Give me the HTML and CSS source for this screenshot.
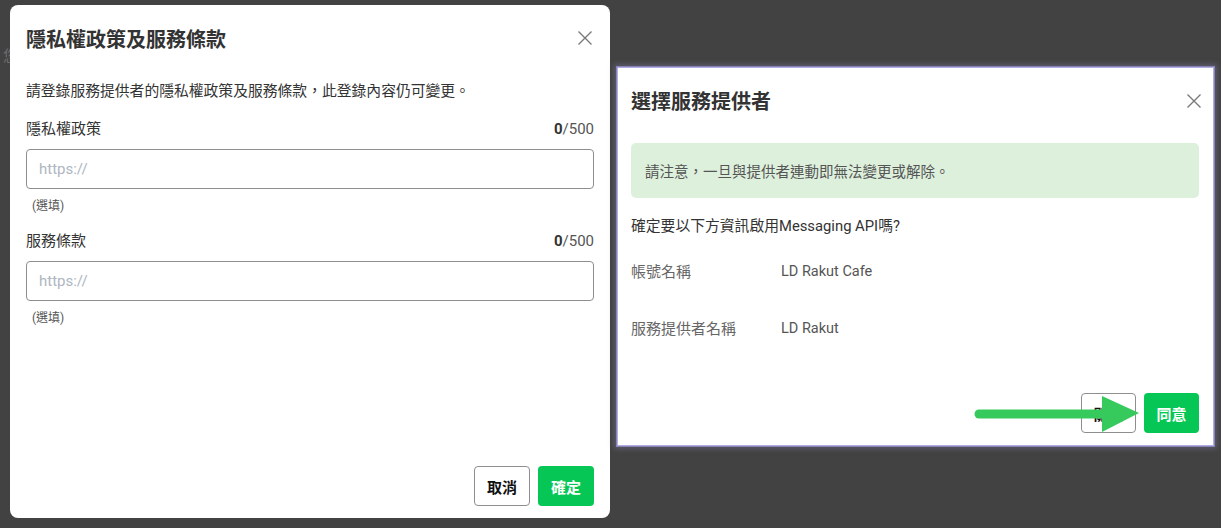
FILE: index.html
```html
<!DOCTYPE html>
<html lang="zh-Hant">
<head>
<meta charset="utf-8">
<title>Modals</title>
<link rel="stylesheet" href="styles.css">
</head>
<body>
<div class="backdrop-text">您</div>
<div class="stage">
  <section class="modal modal-left">
    <header class="m-head">
      <h2 class="m-title">隱私權政策及服務條款</h2>
      <button class="close" aria-label="close">
        <svg viewBox="0 0 16 16" width="16" height="16"><path d="M1.5 1.5 L14.5 14.5 M14.5 1.5 L1.5 14.5" stroke="#7a7a7a" stroke-width="1.4" fill="none"/></svg>
      </button>
    </header>
    <div class="m-body">
      <p class="desc">請登錄服務提供者的隱私權政策及服務條款，此登錄內容仍可變更。</p>
      <div class="field">
        <div class="field-top"><span class="label">隱私權政策</span><span class="count"><b>0</b>/500</span></div>
        <div class="input"><span class="ph">https://</span></div>
        <div class="hint">(選填)</div>
      </div>
      <div class="field field-2">
        <div class="field-top"><span class="label">服務條款</span><span class="count"><b>0</b>/500</span></div>
        <div class="input"><span class="ph">https://</span></div>
        <div class="hint">(選填)</div>
      </div>
    </div>
    <footer class="m-foot">
      <button class="btn btn-outline">取消</button>
      <button class="btn btn-green">確定</button>
    </footer>
  </section>

  <section class="modal modal-right">
    <header class="r-head">
      <h2 class="m-title">選擇服務提供者</h2>
      <button class="close" aria-label="close">
        <svg viewBox="0 0 16 16" width="16" height="16"><path d="M1.5 1.5 L14.5 14.5 M14.5 1.5 L1.5 14.5" stroke="#7a7a7a" stroke-width="1.4" fill="none"/></svg>
      </button>
    </header>
    <div class="r-body">
      <div class="alert">請注意，一旦與提供者連動即無法變更或解除。</div>
      <p class="confirm">確定要以下方資訊啟用Messaging API嗎?</p>
      <div class="row"><span class="k">帳號名稱</span><span class="v">LD Rakut Cafe</span></div>
      <div class="row row-2"><span class="k">服務提供者名稱</span><span class="v">LD Rakut</span></div>
    </div>
    <footer class="r-foot">
      <button class="btn btn-outline btn-sm">關閉</button>
      <button class="btn btn-green btn-sm">同意</button>
    </footer>
    <svg class="arrow" viewBox="0 0 180 45" width="180" height="45">
      <line x1="11" y1="21" x2="140" y2="21" stroke="#36c95c" stroke-width="9" stroke-linecap="round"/>
      <polygon points="134,3 171,20 134,39" fill="#36c95c"/>
    </svg>
  </section>
</div>
</body>
</html>
```

FILE: styles.css
```css
* { box-sizing: border-box; }
html, body { margin: 0; padding: 0; }
body {
  background: #424242;
  width: 1221px;
  height: 528px;
  overflow: hidden;
  font-family: Roboto, "Noto Sans CJK TC", sans-serif;
  color: #333;
  position: relative;
}
.backdrop-text {
  position: absolute;
  left: 3px;
  top: 44px;
  font-size: 15px;
  color: #6e6e6e;
}
.stage {
  display: flex;
  align-items: flex-start;
  gap: 8px;
  padding: 5px 0 0 10px;
  position: relative;
}
.modal {
  background: #fff;
  display: flex;
  flex-direction: column;
}
.modal-left {
  width: 600px;
  height: 513px;
  border-radius: 8px;
  padding: 0 16px 12px;
}
.m-head {
  display: flex;
  align-items: center;
  justify-content: space-between;
  padding-top: 21px;
}
.m-title {
  margin: 0;
  font-size: 20px;
  line-height: 28px;
  font-weight: 700;
  color: #333;
}
.close {
  border: 0;
  background: none;
  padding: 0;
  width: 16px;
  height: 16px;
  display: flex;
  margin-right: 1px;
  margin-top: -4px;
}
.m-body { flex: 1; }
.desc {
  margin: 27px 0 0;
  font-size: 14.8px;
  line-height: 20px;
  color: #333;
}
.field { margin-top: 18px; }
.field-2 { margin-top: 17px; }
.field-top {
  display: flex;
  justify-content: space-between;
  font-size: 15px;
  line-height: 20px;
}
.label { color: #333; }
.count { color: #555; }
.count b { color: #333; font-weight: 700; }
.input {
  margin-top: 10px;
  height: 40px;
  border: 1px solid #8e8e8e;
  border-radius: 4px;
  display: flex;
  align-items: center;
  padding-left: 12px;
}
.ph {
  color: #aeb6c0;
  font-size: 15px;
}
.hint {
  margin-top: 9px;
  font-size: 12px;
  line-height: 16px;
  color: #555;
  padding-left: 6px;
}
.m-foot {
  display: flex;
  justify-content: flex-end;
  gap: 8px;
}
.btn {
  height: 40px;
  width: 56px;
  border-radius: 4px;
  font-family: Roboto, "Noto Sans CJK TC", sans-serif;
  font-size: 15px;
  font-weight: 700;
  padding: 0;
  cursor: pointer;
}
.btn-outline {
  background: #fff;
  color: #111;
  border: 1px solid #8e8e8e;
}
.btn-green {
  background: #06c755;
  color: #fff;
  border: 0;
}
.btn-sm { width: 55px; }

.modal-right {
  position: relative;
  margin-top: 63px;
  width: 595px;
  height: 377px;
  padding: 0 14px 12px 13px;
  box-shadow: 0 0 0 1px #b0ade6, 0 0 0 2px #8784b4, 0 0 5px 4px #5c5a6c;
}
.r-head {
  display: flex;
  align-items: center;
  justify-content: space-between;
  padding-top: 20px;
}
.r-head .close { margin-right: -3px; margin-top: -2px; }
.r-body { flex: 1; }
.alert {
  margin-top: 27px;
  height: 55px;
  background: #ddf0dc;
  border-radius: 5px;
  display: flex;
  align-items: center;
  padding-left: 14px;
  font-size: 14.5px;
  color: #555;
}
.confirm {
  margin: 18px 0 0;
  font-size: 14.8px;
  line-height: 20px;
  color: #333;
}
.row {
  display: flex;
  margin-top: 26px;
  font-size: 15px;
  line-height: 20px;
}
.row-2 { margin-top: 37px; }
.k { width: 150px; color: #666; }
.v { color: #555; font-size: 14.5px; }
.r-foot {
  display: flex;
  justify-content: flex-end;
  gap: 8px;
}
.arrow {
  position: absolute;
  left: 350px;
  top: 325px;
}
```
